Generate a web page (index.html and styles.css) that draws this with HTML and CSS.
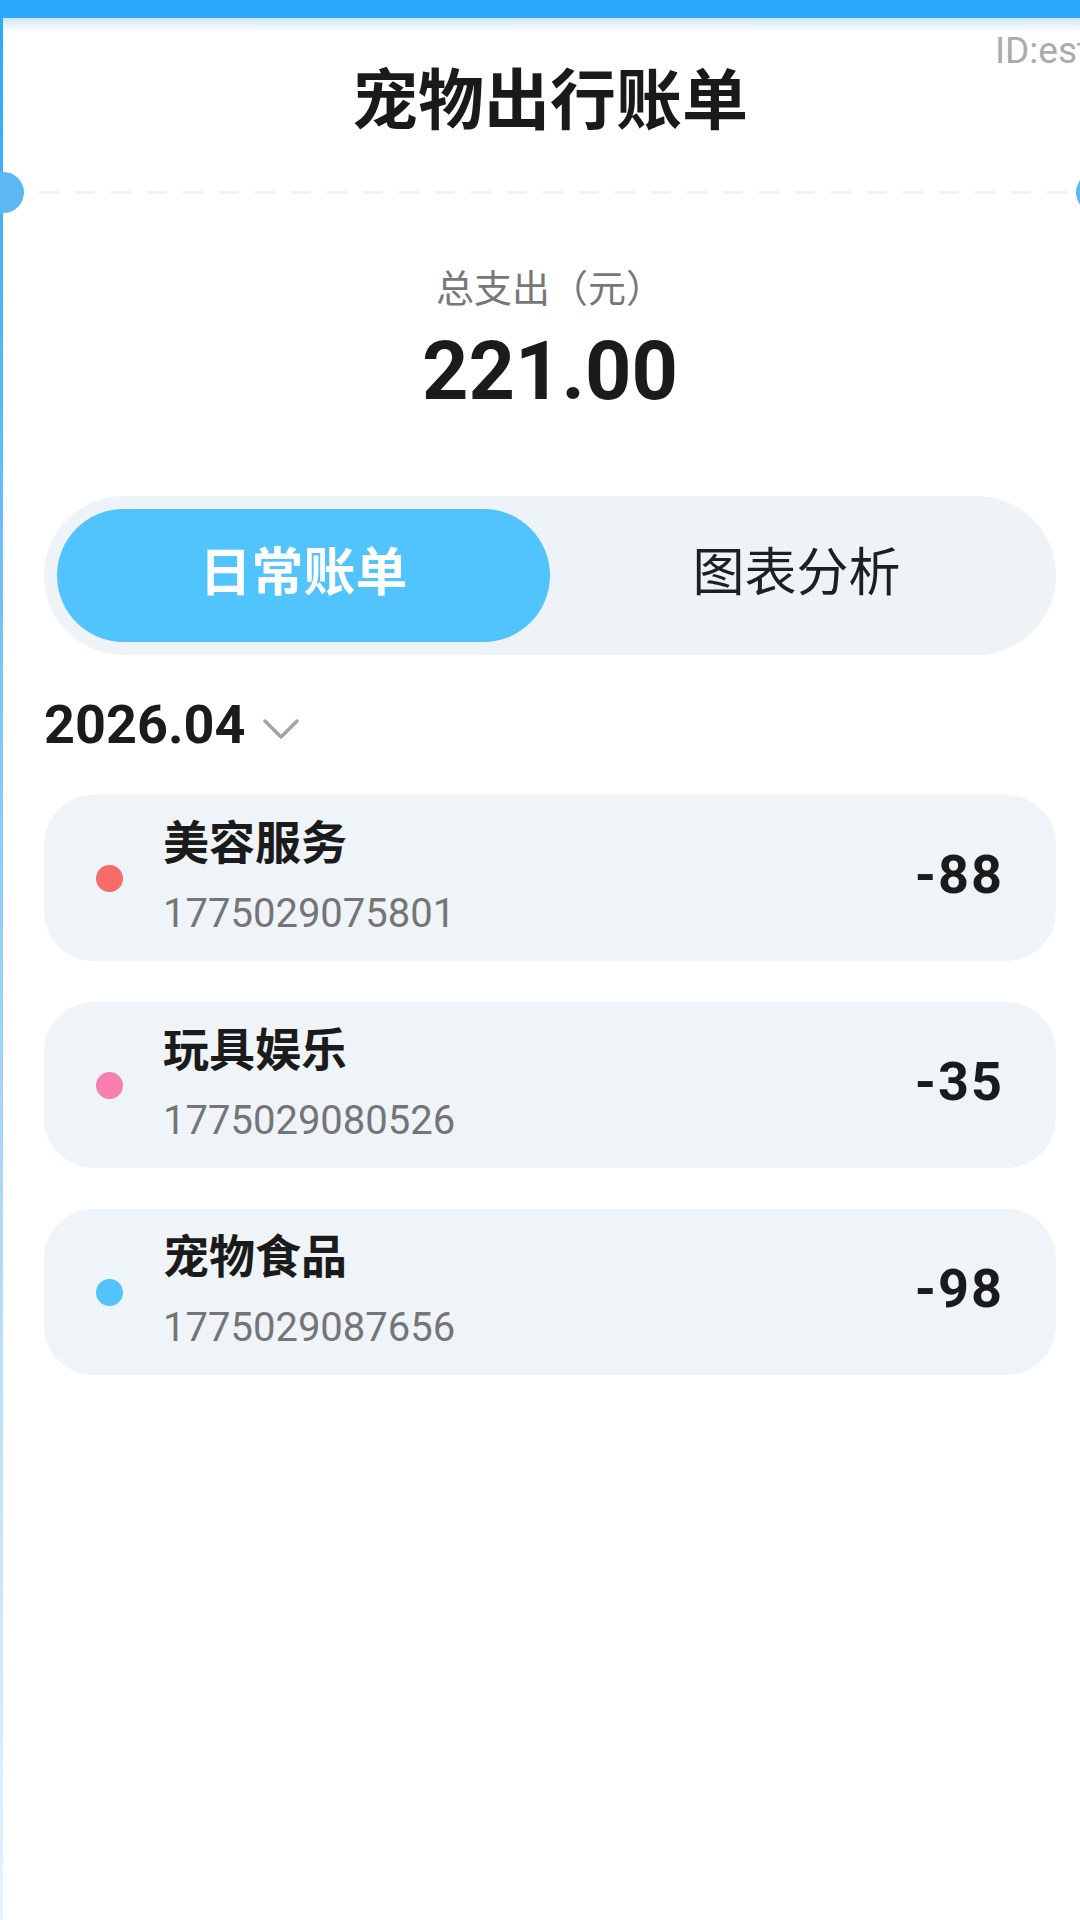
FILE: index.html
```html
<!DOCTYPE html>
<html lang="zh-CN">
<head>
  <meta charset="UTF-8" />
  <meta name="viewport" content="width=device-width, initial-scale=1.0"/>
  <title>宠物出行账单</title>
  <link rel="stylesheet" href="styles.css">
</head>
<body>

<div class="bill-page">
  <!-- Header -->
  <div class="bill-header">
    <span class="bill-id">ID:est</span>
    <h1 class="bill-title">宠物出行账单</h1>
  </div>
  <div class="bill-divider"></div>

  <!-- Total -->
  <div class="bill-summary">
    <div class="summary-label">总支出（元）</div>
    <div class="summary-amount">221.00</div>
  </div>

  <!-- Tabs -->
  <div class="bill-tabs">
    <button class="tab-btn active">日常账单</button>
    <button class="tab-btn">图表分析</button>
  </div>

  <!-- Month picker -->
  <div class="month-row">
    <span class="month-text">2026.04</span>
    <svg class="month-arrow" width="40" height="26" viewBox="0 0 40 26">
      <polyline points="4,5 20,21 36,5" fill="none" stroke="#a3a3a3" stroke-width="3.5" stroke-linecap="round" stroke-linejoin="round"/>
    </svg>
  </div>

  <!-- Records -->
  <div class="record-list">
    <div class="record-item">
      <span class="record-dot" style="background:#f86b6b"></span>
      <div class="record-info">
        <div class="record-name">美容服务</div>
        <div class="record-time">1775029075801</div>
      </div>
      <div class="record-amount">-88</div>
    </div>
    <div class="record-item">
      <span class="record-dot" style="background:#f87fb0"></span>
      <div class="record-info">
        <div class="record-name">玩具娱乐</div>
        <div class="record-time">1775029080526</div>
      </div>
      <div class="record-amount">-35</div>
    </div>
    <div class="record-item">
      <span class="record-dot" style="background:#52c4fd"></span>
      <div class="record-info">
        <div class="record-name">宠物食品</div>
        <div class="record-time">1775029087656</div>
      </div>
      <div class="record-amount">-98</div>
    </div>
  </div>
</div>

</body>
</html>
```

FILE: styles.css
```css
/* Base Reset */
* { margin: 0; padding: 0; box-sizing: border-box; }
html, body { height: 100%; }
body {
  font-family: "Noto Sans CJK SC", "Noto Sans", sans-serif;
  background: linear-gradient(to bottom, #2aa8f9 0%, #8fcdf6 45%, #e6f3fc 100%);
  padding-top: 18px;
  overflow: hidden;
  color: #1b1b1b;
}

/* Page card */
.bill-page {
  position: relative;
  margin-left: 3px;
  width: 1094px;
  min-height: 1902px;
  background: linear-gradient(to bottom, #cfe5fb 0, #ffffff 14px);
}

/* Header */
.bill-header {
  height: 173px;
  padding-top: 44px;
  text-align: center;
}

.bill-id {
  position: absolute;
  top: 14px;
  left: 992px;
  font-family: Roboto, sans-serif;
  font-size: 37px;
  line-height: 37px;
  color: #ababab;
  white-space: nowrap;
}

.bill-title {
  font-size: 66px;
  line-height: 66px;
  font-weight: 700;
  color: #1a1a1a;
}

.bill-divider {
  position: relative;
  height: 3px;
  background: repeating-linear-gradient(to right, #eff1f3 0 20px, transparent 20px 36px);
}

.bill-divider::before,
.bill-divider::after {
  content: "";
  position: absolute;
  top: -19px;
  width: 41px;
  height: 41px;
  border-radius: 50%;
  background: #5cb8f3;
}
.bill-divider::before { left: -20px; }
.bill-divider::after { right: -20px; }

/* Summary */
.bill-summary {
  padding-top: 73px;
  text-align: center;
}

.summary-label {
  font-size: 38px;
  line-height: 38px;
  color: #777;
}

.summary-amount {
  margin-top: 26px;
  font-family: Roboto, sans-serif;
  font-size: 81px;
  line-height: 81px;
  font-weight: 700;
  color: #1b1b1b;
}

/* Tabs */
.bill-tabs {
  display: flex;
  margin: 84px 41px 0;
  padding: 13px;
  height: 159px;
  background: #eef3f8;
  border-radius: 80px;
}

.tab-btn {
  flex: 1;
  border: none;
  background: transparent;
  border-radius: 67px;
  padding-bottom: 14px;
  font-family: "Noto Sans CJK SC", sans-serif;
  font-size: 52px;
  line-height: 52px;
  color: #1f1f1f;
  cursor: pointer;
}

.tab-btn.active {
  background: #52c4fd;
  color: #fff;
  font-weight: 700;
}

/* Month */
.month-row {
  display: flex;
  align-items: center;
  gap: 15px;
  margin-top: 42px;
  padding-left: 41px;
  height: 56px;
}

.month-text {
  font-family: Roboto, sans-serif;
  font-size: 54px;
  line-height: 56px;
  font-weight: 700;
  color: #1b1b1b;
}

.month-arrow { margin-top: 8px; }

/* Records */
.record-list {
  display: flex;
  flex-direction: column;
  gap: 41px;
  margin: 42px 41px 0;
}

.record-item {
  display: flex;
  align-items: center;
  height: 166px;
  padding: 0 52px;
  background: #eff4f9;
  border-radius: 50px;
}

.record-dot {
  width: 27px;
  height: 27px;
  border-radius: 50%;
  flex-shrink: 0;
}

.record-info {
  flex: 1;
  display: flex;
  flex-direction: column;
  gap: 32px;
  margin-left: 40px;
  padding-bottom: 6px;
}

.record-name {
  font-size: 46px;
  line-height: 46px;
  font-weight: 700;
  color: #1b1b1b;
}

.record-time {
  font-family: Roboto, sans-serif;
  font-size: 40px;
  line-height: 40px;
  color: #757575;
}

.record-amount {
  padding-bottom: 8px;
  font-family: Roboto, sans-serif;
  font-size: 54px;
  font-weight: 700;
  letter-spacing: 2px;
  color: #1b1b1b;
}
```
